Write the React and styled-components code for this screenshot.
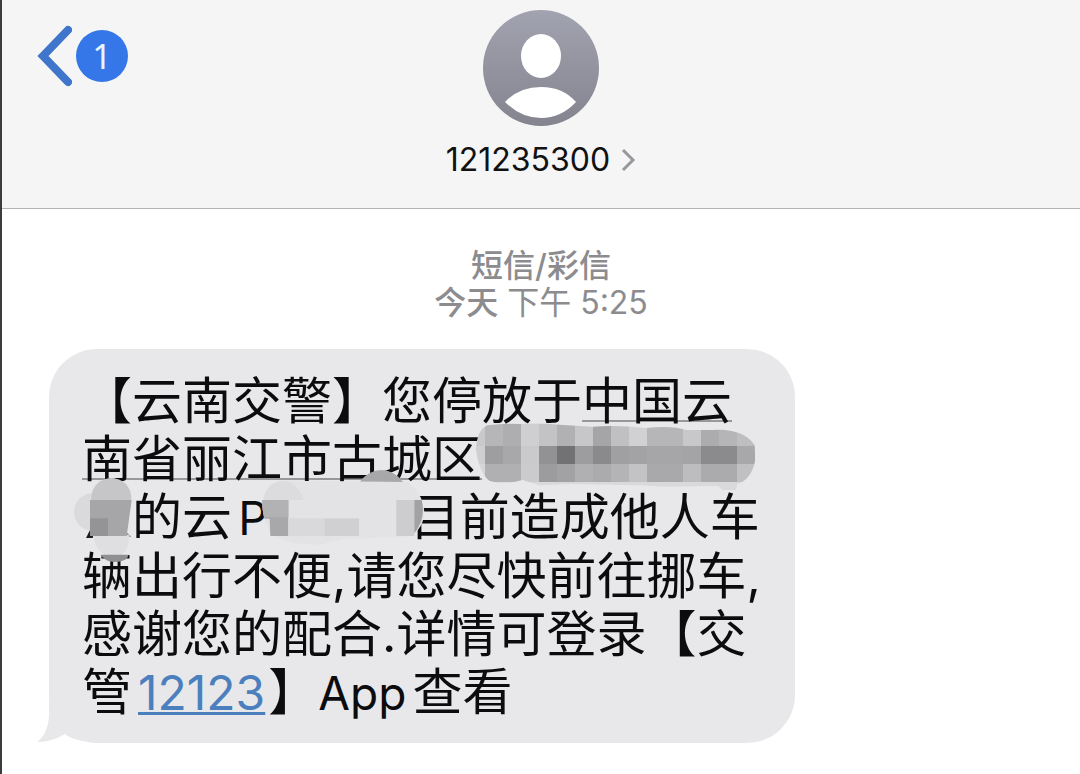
import React from 'react';
import styled, { createGlobalStyle } from 'styled-components';

const GlobalStyle = createGlobalStyle`
    * {
        box-sizing: border-box;
    }
    body {
        margin: 0;
        background-color: #fff;
        font-family: Inter, "Noto Sans CJK SC", sans-serif;
    }
`;

// [x, width, top, middle, bottom]
const mosaic = [
    [50, 28, '#c9c9cb', '#cfcfd2', '#d6d6d8'],
    [78, 54, '#b6b6b8', '#9e9ea0', '#b0b0b2'],
    [132, 54, '#aeaeb0', '#a8a8aa', '#b0b0b2'],
    [186, 54, '#cfcfd1', '#cacacc', '#cbcbcd'],
    [240, 54, '#c3c3c5', '#929294', '#9c9c9e'],
    [294, 54, '#b1b1b3', '#727274', '#a2a2a4'],
    [348, 54, '#c7c7c9', '#9d9d9f', '#b0b0b2'],
    [402, 54, '#a5a5a7', '#8a8a8c', '#ababad'],
    [456, 54, '#c0c0c2', '#a0a0a2', '#b4b4b6'],
    [510, 54, '#d1d1d4', '#a3a3a5', '#c3c3c5'],
    [564, 108, '#b6b6b8', '#a6a6a8', '#a9a9ab'],
    [672, 54, '#c8c8ca', '#a4a4a6', '#bdbdbf'],
    [726, 54, '#acacae', '#8b8b8d', '#ababad'],
    [780, 54, '#b5b5b7', '#8b8b8d', '#ababad'],
    [834, 54, '#bebec0', '#a8a8aa', '#c0c0c2'],
];

function StreetMask() {
    return (
        <Mask $width={272} $left={-6} $top={-16}>
            <svg width="280" height="70" viewBox="50 36 840 210" aria-hidden="true">
                <clipPath id="street">
                    <path d="M50 120Q52 60 84 46Q130 40 180 42Q240 38 300 44L400 50Q470 44 560 54Q640 46 680 60L760 60Q850 54 886 105L888 150Q876 210 834 222L830 240L790 240L776 228L620 230L540 226L330 222L240 226L190 210Q130 226 90 212Q60 190 50 120Z" />
                </clipPath>
                <g clipPath="url(#street)" shapeRendering="crispEdges">
                    {mosaic.map(([x, w, top, middle, bottom]) => (
                        <g key={x}>
                            <rect x={x} y="36" width={w} height="72" fill={top} />
                            <rect x={x} y="108" width={w} height="54" fill={middle} />
                            <rect x={x} y="162" width={w} height="54" fill={bottom} />
                            <rect x={x} y="216" width={w} height="30" fill="#d9d9db" />
                        </g>
                    ))}
                </g>
            </svg>
        </Mask>
    );
}

function NumberMask() {
    return (
        <Mask $width={50} $left={-9} $top={-21}>
            <svg width="62" height="88" viewBox="39 48 186 264" aria-hidden="true">
                <path d="M78 234L92 206L106 206L98 234Z" fill="#1c1c1e" />
                <path d="M196 214L214 230L200 230Z" fill="#808083" />
                <circle cx="98" cy="156" r="56" fill="#dadadc" />
                <path d="M98 224H208Q206 290 160 292Q110 288 98 224Z" fill="#dfdfe1" />
                <circle cx="154" cy="114" r="60" fill="#c6c6c8" />
                <path d="M90 120H215L200 228H90Z" fill="#a6a6a8" />
                <rect x="90" y="175" width="54" height="53" fill="#949496" />
                <path d="M122 284H205Q204 304 162 306Q132 302 122 284Z" fill="#8f8f91" />
            </svg>
        </Mask>
    );
}

function PlateMask() {
    return (
        <Mask $width={142} $left={-7} $top={-29}>
            <svg width="164" height="78" viewBox="602 24 492 234" aria-hidden="true">
                <path d="M898 66Q925 30 964 30Q1004 32 1028 66Z" fill="#a8a8aa" />
                <path d="M606 130Q612 66 670 62L1040 66Q1090 100 1092 160Q1086 222 1030 232L850 236L780 254L700 250L640 226Q606 190 606 130Z" fill="#e3e3e5" />
                <path d="M610 120Q620 64 670 62Q710 64 730 120Z" fill="#dcdcde" />
                <path d="M606 120H684V228H630L628 176H612Z" fill="#a8a8aa" />
                <path d="M612 172H684V120H606Q604 150 612 172Z" fill="#b2b2b4" />
                <rect x="684" y="175" width="108" height="53" fill="#d9d9db" />
                <rect x="792" y="175" width="104" height="53" fill="#d0d0d2" />
                <rect x="1008" y="120" width="54" height="108" fill="#cdcdcf" />
                <path d="M1062 120H1084Q1098 175 1062 220Z" fill="#a2a2a4" />
            </svg>
        </Mask>
    );
}

function App() {
    return (
        <Screen>
            <GlobalStyle />
            <Header>
                <BackButton aria-label="返回">
                    <svg width="36" height="62" viewBox="0 0 36 62" fill="none" aria-hidden="true">
                        <path d="M32 5L7 31L32 57" stroke="#3f76cb" strokeWidth="8" strokeLinecap="round" strokeLinejoin="miter" />
                    </svg>
                    <Unread>1</Unread>
                </BackButton>
                <Contact>
                    <svg width="116" height="116" viewBox="0 0 116 116" aria-hidden="true">
                        <defs>
                            <linearGradient id="avatar" x1="0" y1="0" x2="0" y2="1">
                                <stop offset="0" stopColor="#a2a3b0" />
                                <stop offset="1" stopColor="#83848e" />
                            </linearGradient>
                        </defs>
                        <circle cx="58" cy="58" r="58" fill="url(#avatar)" />
                        <ellipse cx="58" cy="46" rx="20" ry="22" fill="#fff" />
                        <path d="M22 92Q36 77 58 77Q80 77 93 92Q78 108 58 108Q38 108 22 92Z" fill="#fff" />
                    </svg>
                    <ContactName>
                        121235300
                        <svg width="16" height="24" viewBox="0 0 16 24" fill="none" aria-hidden="true">
                            <path d="M3 2L13 12L3 22" stroke="#98989c" strokeWidth="3" />
                        </svg>
                    </ContactName>
                </Contact>
            </Header>
            <Thread>
                <Stamp>
                    <strong>短信/彩信</strong>
                    <span><strong>今天</strong> 下午 5:25</span>
                </Stamp>
                <Bubble>
                    【云南交警】您停放于<Address>中国云南省丽江市古城区</Address><StreetMask />
                    <NumberMask />的云<Latin>P</Latin><PlateMask />目前造成他人车辆出行不便,请您尽快前往挪车,感谢您的配合.详情可登录【交管<PhoneLink href="tel:12123">12123</PhoneLink>】<Latin>App</Latin>查看
                    <Tail width="60" height="44" viewBox="0 0 60 44" aria-hidden="true">
                        <path d="M12 0V14Q12 34 0 43Q15 43 28 35Q38 43 60 43V0Z" fill="#e8e8ea" />
                    </Tail>
                </Bubble>
            </Thread>
        </Screen>
    );
}

const Screen = styled.div`
    min-height: 100vh;
    border-left: 2px solid #3c3c3e;
`;

const Header = styled.header`
    display: grid;
    grid-template-columns: 1fr auto 1fr;
    align-items: start;
    padding: 10px 34px 28px;
    background-color: #f5f5f6;
    border-bottom: 1px solid #b4b4b6;
`;

const BackButton = styled.button`
    display: flex;
    align-items: center;
    gap: 4px;
    justify-self: start;
    margin-top: 15px;
    padding: 0;
    border: none;
    background: none;
    cursor: pointer;
`;

const Unread = styled.span`
    width: 52px;
    height: 52px;
    border-radius: 50%;
    background-color: #3577e8;
    color: #e6f6ff;
    font-family: "Noto Sans", sans-serif;
    font-size: 34px;
    line-height: 52px;
    text-align: center;
`;

const Contact = styled.div`
    display: flex;
    flex-direction: column;
    align-items: center;
    gap: 14px;
`;

const ContactName = styled.div`
    display: flex;
    align-items: center;
    gap: 10px;
    color: #111;
    font-size: 32px;
    line-height: 40px;
`;

const Thread = styled.main`
    padding: 38px 47px 30px;
`;

const Stamp = styled.div`
    display: flex;
    flex-direction: column;
    align-items: center;
    color: #8c8c8f;
    font-size: 32px;
    line-height: 37px;

    strong {
        font-weight: 500;
    }
`;

const Bubble = styled.div`
    position: relative;
    width: fit-content;
    max-width: 746px;
    margin-top: 28px;
    padding: 23px 29px 21px 33px;
    border-radius: 48px;
    background-color: #e8e8ea;
    color: #0c0c0e;
    font-size: 50px;
    line-height: 58px;
    text-autospace: normal;
`;

const Address = styled.span`
    text-decoration: underline 2px #98989b;
    text-underline-offset: 1px;
    text-decoration-skip-ink: none;
`;

const Latin = styled.span`
    font-size: 46px;
`;

const PhoneLink = styled.a`
    margin: 0 3px 0 6px;
    color: #4c7fbd;
    font-size: 48px;
    text-autospace: no-autospace;
    text-decoration: underline 3px;
    text-underline-offset: 2px;
    text-decoration-skip-ink: none;
`;

const Mask = styled.span`
    position: relative;
    display: inline-block;
    width: ${(props) => props.$width}px;
    height: 50px;
    vertical-align: middle;

    svg {
        position: absolute;
        z-index: 1;
        left: ${(props) => props.$left}px;
        top: ${(props) => props.$top}px;
    }
`;

const Tail = styled.svg`
    position: absolute;
    left: -12px;
    bottom: 0;
`;

export default App;
